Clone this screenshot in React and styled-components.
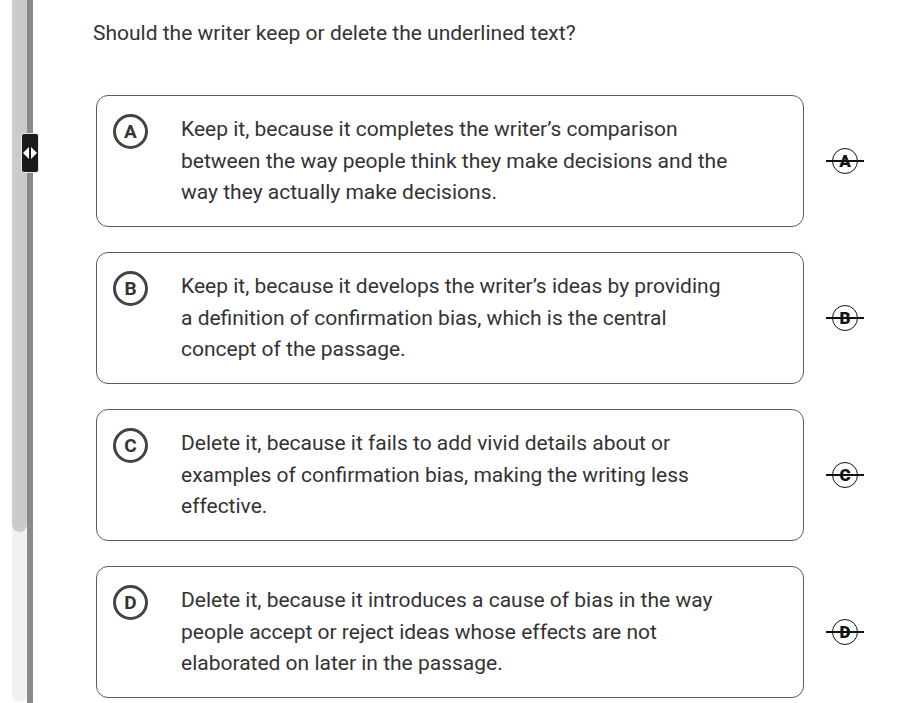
import React from 'react';
import styled, { createGlobalStyle } from 'styled-components';

const GlobalStyle = createGlobalStyle`
  html, body {
    margin: 0;
    padding: 0;
    background: #ffffff;
  }
  body {
    font-family: Roboto, "Liberation Sans", Arial, sans-serif;
    color: #333333;
  }
`;

const options = [
  {
    letter: 'A',
    text: 'Keep it, because it completes the writer\u2019s comparison between the way people think they make decisions and the way they actually make decisions.',
  },
  {
    letter: 'B',
    text: 'Keep it, because it develops the writer\u2019s ideas by providing a definition of confirmation bias, which is the central concept of the passage.',
  },
  {
    letter: 'C',
    text: 'Delete it, because it fails to add vivid details about or examples of confirmation bias, making the writing less effective.',
  },
  {
    letter: 'D',
    text: 'Delete it, because it introduces a cause of bias in the way people accept or reject ideas whose effects are not elaborated on later in the passage.',
  },
];

const Page = styled.div`
  position: relative;
  display: flex;
  height: 703px;
  overflow: hidden;
`;

const Rail = styled.div`
  display: flex;
  padding-left: 12px;
  flex-shrink: 0;
`;

const Track = styled.div`
  width: 15px;
  height: 702px;
  background: #f1f1f1;
  border-radius: 0 0 8px 8px;
  display: flex;
  flex-direction: column;
`;

const Thumb = styled.div`
  height: 532px;
  background: #cbcbcb;
  border-radius: 0 0 8px 8px;
`;

const Divider = styled.div`
  width: 6px;
  background: #8a8a8a;
`;

const Handle = styled.div`
  position: absolute;
  left: 21px;
  top: 133px;
  width: 18px;
  height: 40px;
  box-sizing: border-box;
  background: #1b1b1b;
  border: 1px solid #e8e8e8;
  border-radius: 3px;
  display: flex;
  align-items: center;
  justify-content: center;
  gap: 2px;
`;

const Main = styled.main`
  flex: 1;
  padding: 21px 0 0 60px;
`;

const Question = styled.p`
  margin: 0 0 50px;
  font-size: 21px;
  line-height: 24px;
  color: #333333;
`;

const List = styled.div`
  display: flex;
  flex-direction: column;
  gap: 25px;
`;

const Row = styled.div`
  display: flex;
  align-items: center;
`;

const Card = styled.div`
  box-sizing: border-box;
  width: 708px;
  height: 132px;
  margin-left: 3px;
  padding: 18px 17px 0 16px;
  border: 1px solid #5c5c5c;
  border-radius: 12px;
  display: grid;
  grid-template-columns: 35px 1fr;
  column-gap: 33px;
  align-items: start;
`;

const LetterBadge = styled.span`
  box-sizing: border-box;
  width: 35px;
  height: 35px;
  border: 3px solid #444444;
  border-radius: 50%;
  display: flex;
  align-items: center;
  justify-content: center;
  font-size: 19px;
  font-weight: 700;
  color: #333333;
`;

const OptionText = styled.p`
  margin: 0;
  max-width: 552px;
  font-size: 21px;
  line-height: 31.5px;
  color: #333333;
`;

const CrossCol = styled.div`
  flex: 1;
  display: flex;
  justify-content: center;
  padding-right: 34px;
`;

const CrossOut = styled.button`
  position: relative;
  box-sizing: border-box;
  width: 26px;
  height: 26px;
  padding: 0;
  border: 1.5px solid #111111;
  border-radius: 50%;
  background: #ffffff;
  display: flex;
  align-items: center;
  justify-content: center;
  font-family: Roboto, "Liberation Sans", Arial, sans-serif;
  font-size: 17px;
  font-weight: 900;
  line-height: 1;
  color: #111111;
  cursor: pointer;

  &::after {
    content: '';
    position: absolute;
    left: -7px;
    right: -7px;
    top: 50%;
    height: 1.5px;
    margin-top: -0.75px;
    background: #111111;
  }
`;

const Arrow = ({ dir }) => (
  <svg width="6" height="12" viewBox="0 0 6 12">
    {dir === 'left' ? (
      <polygon points="6,0 0,6 6,12" fill="#ffffff" />
    ) : (
      <polygon points="0,0 6,6 0,12" fill="#ffffff" />
    )}
  </svg>
);

export default function App() {
  return (
    <Page>
      <GlobalStyle />
      <Rail>
        <Track>
          <Thumb />
        </Track>
        <Divider />
      </Rail>
      <Handle>
        <Arrow dir="left" />
        <Arrow dir="right" />
      </Handle>
      <Main>
        <Question>Should the writer keep or delete the underlined text?</Question>
        <List>
          {options.map((opt) => (
            <Row key={opt.letter}>
              <Card>
                <LetterBadge>{opt.letter}</LetterBadge>
                <OptionText>{opt.text}</OptionText>
              </Card>
              <CrossCol>
                <CrossOut aria-label={`Cross out option ${opt.letter}`}>{opt.letter}</CrossOut>
              </CrossCol>
            </Row>
          ))}
        </List>
      </Main>
    </Page>
  );
}
